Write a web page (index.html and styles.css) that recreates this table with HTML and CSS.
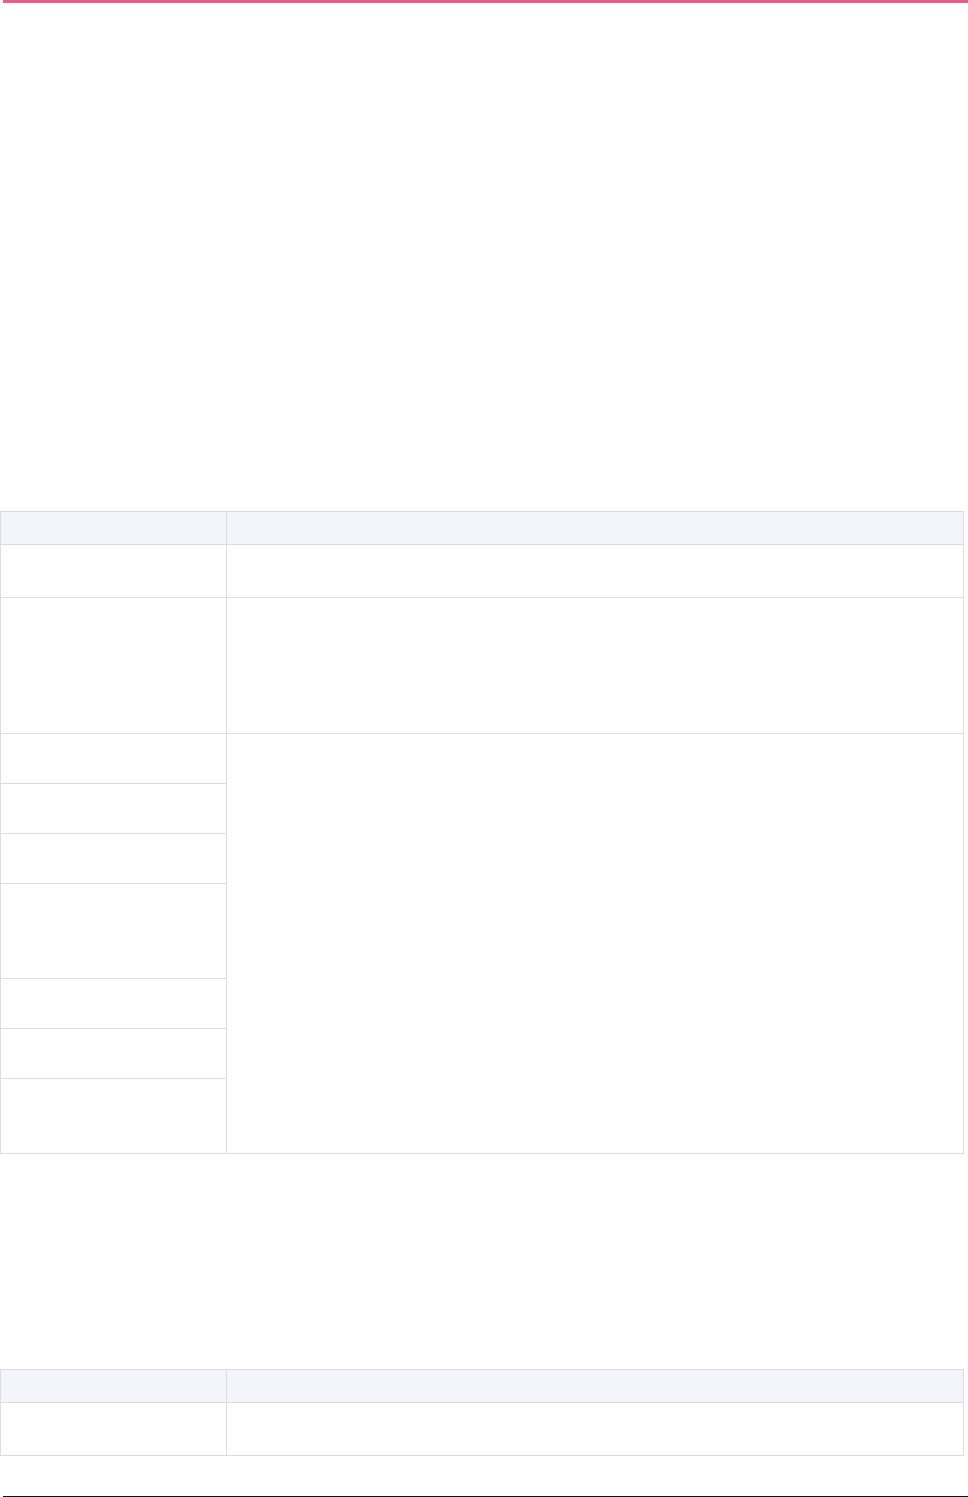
FILE: index.html
```html
<!DOCTYPE html>
<html lang="en">
<head>
<meta charset="utf-8">
<title>Page</title>
<link rel="stylesheet" href="styles.css">
</head>
<body>
<div class="topbar"></div>
<main class="page">
  <section class="block block-first">
    <div class="grid">
      <div class="cell head"></div>
      <div class="cell head"></div>
      <div class="cell r53"></div>
      <div class="cell r53"></div>
      <div class="cell r136"></div>
      <div class="cell r136"></div>
      <div class="cell r50"></div>
      <div class="cell span7"></div>
      <div class="cell r50"></div>
      <div class="cell r50"></div>
      <div class="cell r95"></div>
      <div class="cell r50"></div>
      <div class="cell r50"></div>
      <div class="cell r75"></div>
    </div>
  </section>
  <section class="block block-second">
    <div class="grid">
      <div class="cell head"></div>
      <div class="cell head"></div>
      <div class="cell r53"></div>
      <div class="cell r53"></div>
    </div>
  </section>
</main>
<div class="footline"></div>
</body>
</html>
```
FILE: styles.css
```css
html, body {
  margin: 0;
  padding: 0;
  background: #ffffff;
  font-family: "Inter", "Liberation Sans", sans-serif;
  color: #333;
}

.topbar {
  height: 3px;
  margin-left: 3px;
  background: #ea5a8b;
}

.page {
  display: flex;
  flex-direction: column;
}

.block-first {
  margin-top: 508px;
}

.block-second {
  margin-top: 215px;
}

.grid {
  display: grid;
  grid-template-columns: 226px 737px;
  width: 964px;
  box-sizing: border-box;
  border-top: 1px solid #dddddd;
  border-left: 1px solid #dddddd;
}

.cell {
  box-sizing: border-box;
  border-right: 1px solid #dddddd;
  border-bottom: 1px solid #dddddd;
  background: #ffffff;
}

.head {
  height: 33px;
  background: #f4f5fa;
}

.r53 { height: 53px; }
.r136 { height: 136px; }
.r50 { height: 50px; }
.r95 { height: 95px; }
.r75 { height: 75px; }

.span7 {
  grid-column: 2;
  grid-row: span 7;
}

.footline {
  margin-top: 40px;
  margin-left: 3px;
  height: 1px;
  background: #111111;
}
```
